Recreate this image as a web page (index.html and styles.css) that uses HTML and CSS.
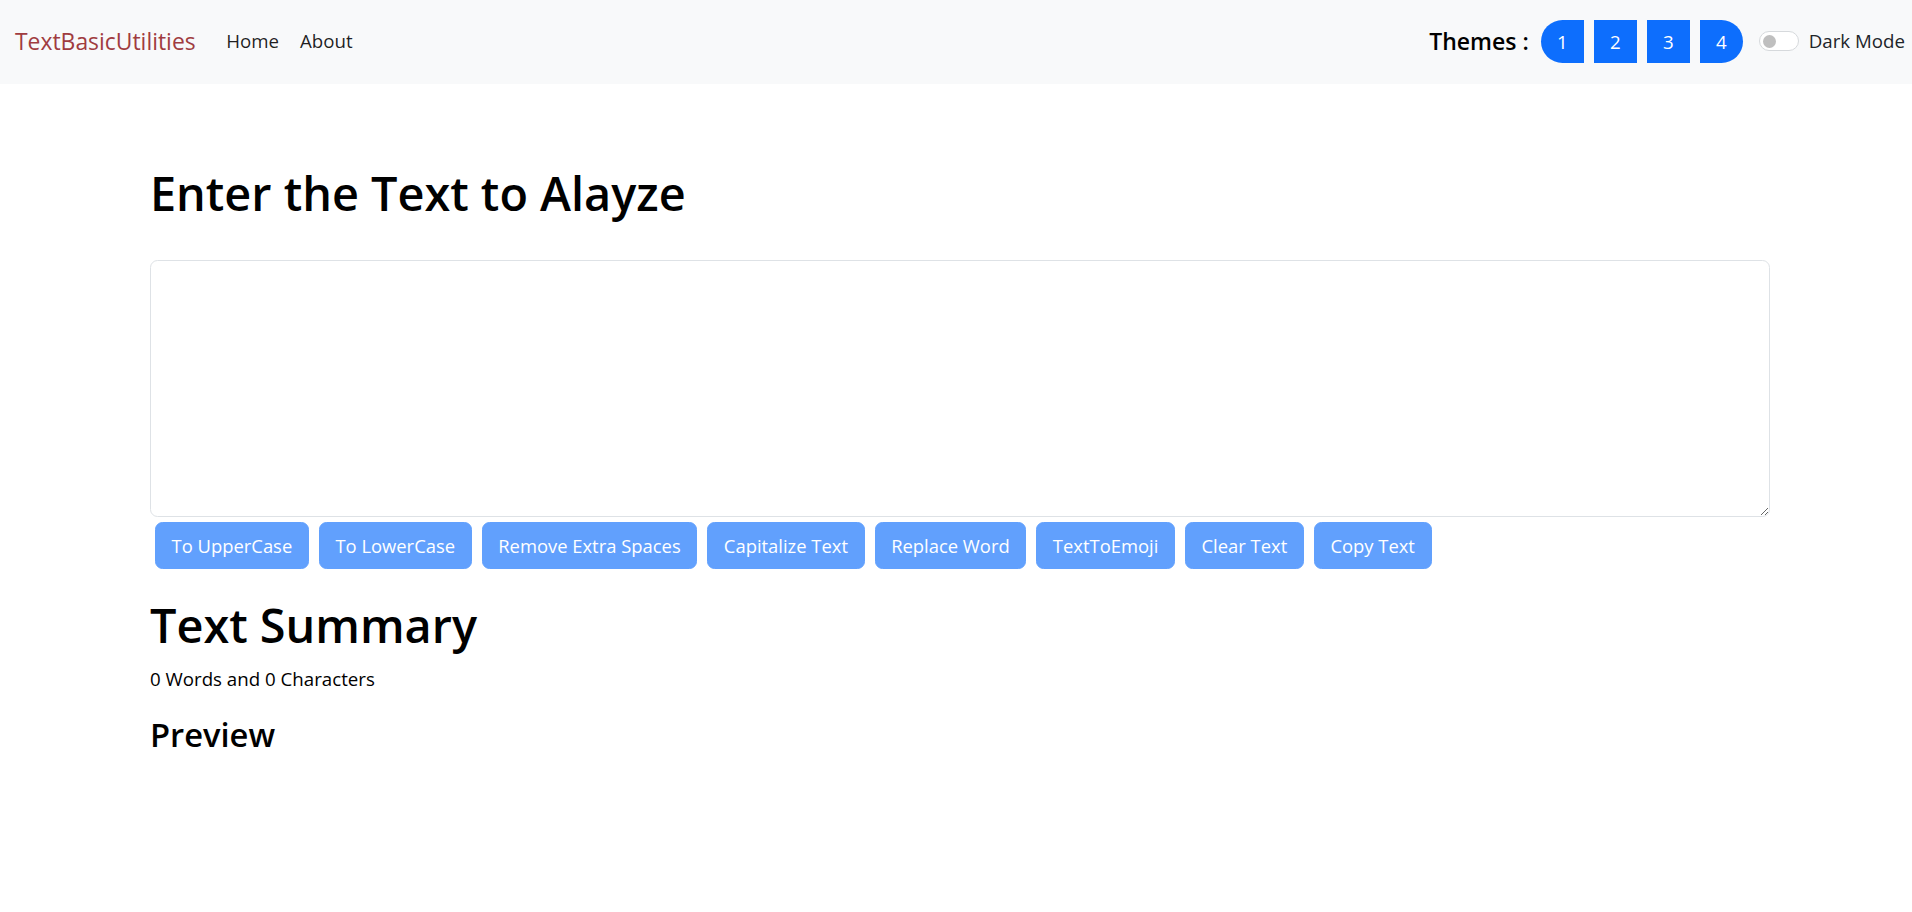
FILE: index.html
```html
<!DOCTYPE html>
<html lang="en">
<head>
<meta charset="utf-8">
<title>TextBasicUtilities</title>
<link rel="stylesheet" href="styles.css">
</head>
<body>
<nav class="navbar">
  <a class="brand" href="#">TextBasicUtilities</a>
  <ul class="nav-links">
    <li><a class="nav-link" href="#">Home</a></li>
    <li><a class="nav-link" href="#">About</a></li>
  </ul>
  <div class="nav-right">
    <h5 class="themes-label">Themes :</h5>
    <div class="theme-group">
      <button class="theme-btn first">1</button>
      <button class="theme-btn">2</button>
      <button class="theme-btn">3</button>
      <button class="theme-btn last">4</button>
    </div>
    <div class="switch">
      <span class="switch-track"><span class="switch-knob"></span></span>
      <label class="switch-label">Dark Mode</label>
    </div>
  </div>
</nav>
<main class="container">
  <h1 class="title">Enter the Text to Alayze</h1>
  <textarea class="text-input" rows="8"></textarea>
  <div class="actions">
    <button class="action-btn">To UpperCase</button>
    <button class="action-btn">To LowerCase</button>
    <button class="action-btn">Remove Extra Spaces</button>
    <button class="action-btn">Capitalize Text</button>
    <button class="action-btn">Replace Word</button>
    <button class="action-btn">TextToEmoji</button>
    <button class="action-btn">Clear Text</button>
    <button class="action-btn">Copy Text</button>
  </div>
  <h1 class="summary-title">Text Summary</h1>
  <p class="summary">0 Words and 0 Characters</p>
  <h3 class="preview-title">Preview</h3>
</main>
</body>
</html>
```
FILE: styles.css
```css
* { box-sizing: border-box; }

html, body {
  margin: 0;
  padding: 0;
  background: #ffffff;
}

body {
  font-family: "Open Sans", "Noto Sans", "Liberation Sans", sans-serif;
  font-size: 18.7px;
  line-height: 30px;
  color: #212529;
}

/* ---------- navbar ---------- */
.navbar {
  height: 84px;
  background: #f8f9fa;
  display: flex;
  align-items: center;
  padding: 0 7px 2px 15px;
}

.brand {
  font-size: 22.9px;
  line-height: 37px;
  color: #a03c40;
  text-decoration: none;
  margin-right: 20px;
}

.nav-links {
  list-style: none;
  margin: 0;
  padding: 0;
  display: flex;
}

.nav-link {
  display: block;
  padding: 0 10.5px;
  color: rgba(0, 0, 0, 0.88);
  text-decoration: none;
  font-size: 18.7px;
  line-height: 30px;
}

.nav-right {
  margin-left: auto;
  display: flex;
  align-items: center;
}

.themes-label {
  margin: 0 12px 0 0;
  font-size: 23px;
  line-height: 30px;
  font-weight: 600;
  color: #000;
}

.theme-group {
  display: flex;
  gap: 10px;
}

.theme-btn {
  width: 43px;
  height: 43px;
  border: none;
  border-radius: 0;
  background: #0d6efd;
  color: #fff;
  font-family: inherit;
  font-size: 18.7px;
  padding: 0;
}

.theme-btn.first { border-radius: 22px 0 0 22px; }
.theme-btn.last { border-radius: 0 22px 22px 0; }

.switch {
  display: flex;
  align-items: center;
  margin-left: 16px;
}

.switch-track {
  width: 40px;
  height: 20px;
  border: 1.25px solid #d6d9dc;
  border-radius: 10px;
  background: #fff;
  display: flex;
  align-items: center;
  padding-left: 3px;
}

.switch-knob {
  width: 13px;
  height: 13px;
  border-radius: 50%;
  background: #bfbfbf;
}

.switch-label {
  margin-left: 10px;
  font-size: 18.7px;
  line-height: 30px;
  color: #212529;
}

/* ---------- main ---------- */
.container {
  width: 1620px;
  margin-left: 150px;
  padding-top: 79px;
}

.title,
.summary-title {
  font-size: 46.8px;
  line-height: 60px;
  font-weight: 600;
  margin: 0;
  color: #000;
}

.title { margin-bottom: 37px; }

.text-input {
  display: block;
  width: 1620px;
  height: 257px;
  margin: 0;
  border: 1.25px solid #dee2e6;
  border-radius: 7.5px;
  padding: 7.5px 15px;
  font-family: inherit;
  font-size: 18.7px;
  line-height: 30px;
  resize: vertical;
  outline: none;
}

.actions {
  display: flex;
  gap: 10px;
  padding: 5px 5px 0;
}

.action-btn {
  font-family: inherit;
  font-size: 18.4px;
  line-height: 30px;
  padding: 7.5px 15.6px;
  border: 1.25px solid #0d6efd;
  border-radius: 7.5px;
  background: #0d6efd;
  color: #fff;
  opacity: 0.65;
}

.summary-title { margin-top: 26px; margin-bottom: 8.5px; }

.summary {
  margin: 0 0 20px;
  color: #000;
}

.preview-title {
  font-size: 32.7px;
  line-height: 42px;
  font-weight: 600;
  margin: 0;
  color: #000;
}
```
